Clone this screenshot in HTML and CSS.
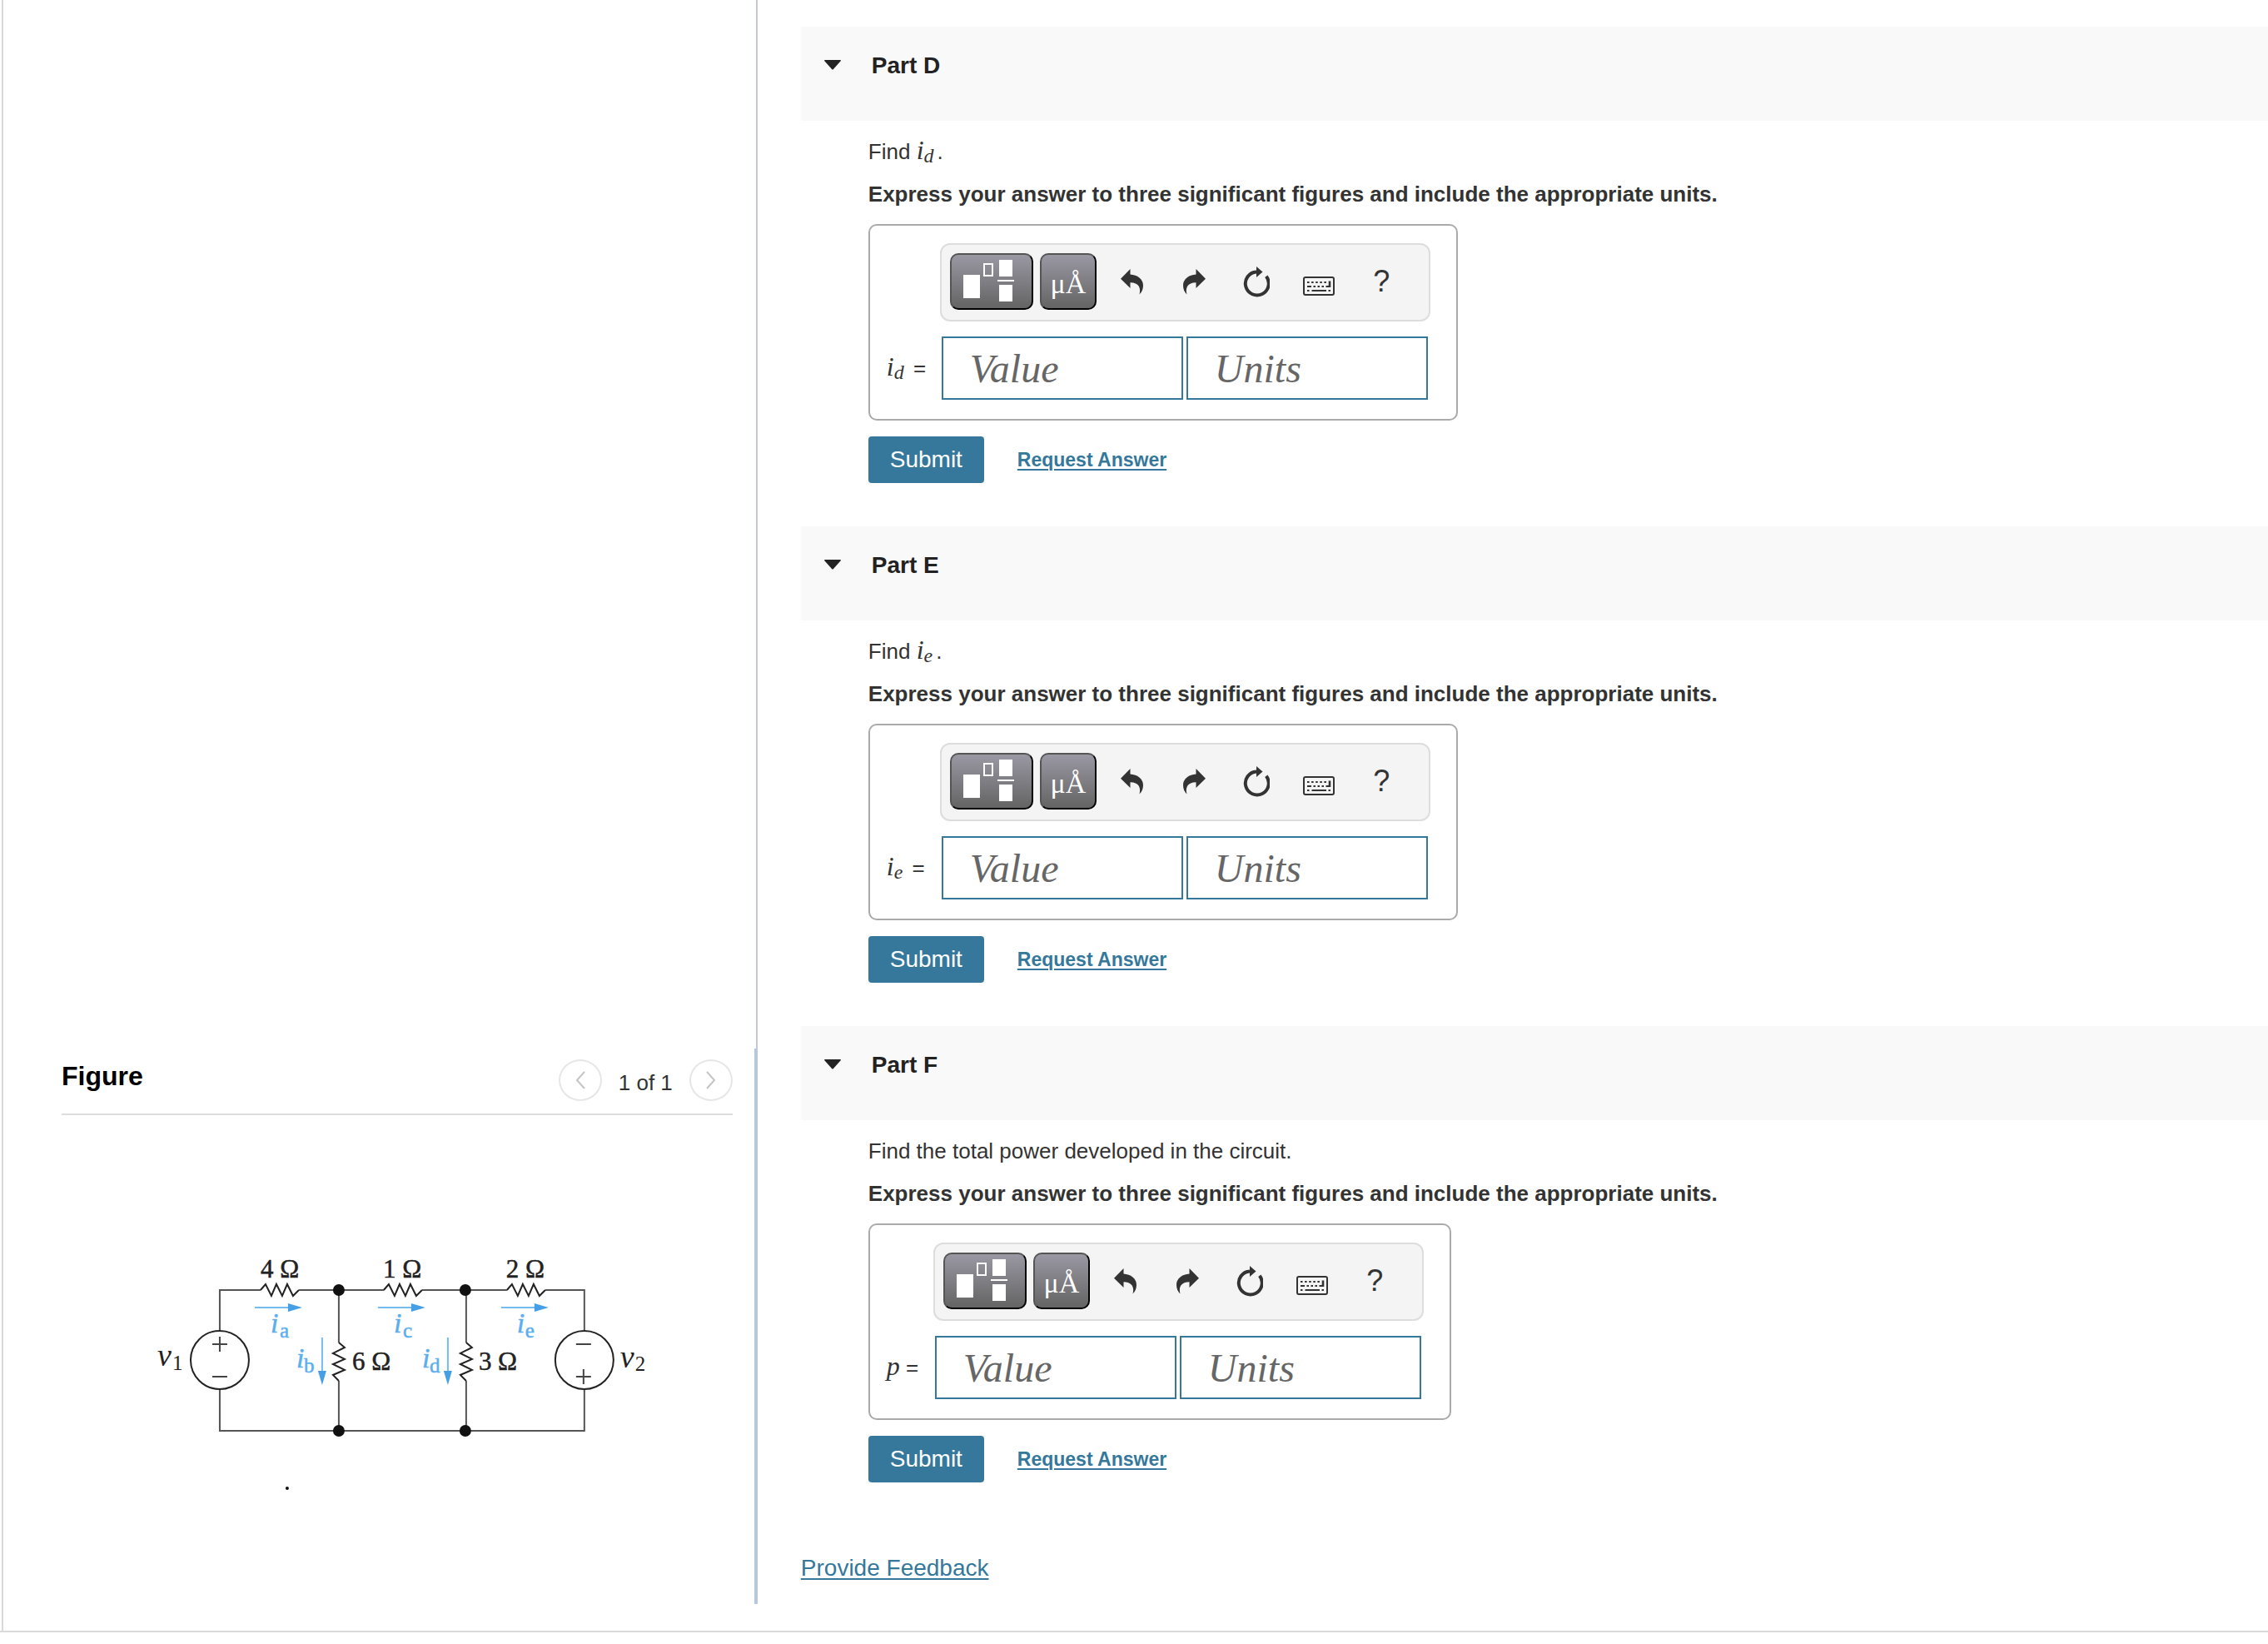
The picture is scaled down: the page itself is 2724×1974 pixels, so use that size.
FILE: index.html
```
<!DOCTYPE html>
<html lang="en">
<head>
  <meta charset="UTF-8" />
  <meta name="viewport" content="width=device-width, initial-scale=1.0"/>
  <title>Circuit Problem</title>
  <link rel="stylesheet" href="styles.css">
</head>
<body>

  <!-- Shared toolbar icons -->
  <svg class="sprite" aria-hidden="true">
    <symbol id="icon-template" viewBox="0 0 96 64">
      <rect x="14" y="24" width="20" height="28" fill="#fff"/>
      <rect x="39" y="11" width="10" height="14" fill="none" stroke="#fff" stroke-width="2"/>
      <rect x="57" y="6" width="16" height="20" fill="#fff"/>
      <rect x="55" y="30" width="20" height="2" fill="#fff"/>
      <rect x="57" y="36" width="16" height="20" fill="#fff"/>
    </symbol>
    <symbol id="icon-undo" viewBox="0 0 27 31">
      <path d="M0 11.7 L11.5 0 V6.5 C20 7 27 12 27 19.5 C27 24 25.5 28 22.5 30.5 C24.5 23 22 16.5 11.5 16.3 V23 Z" fill="#333"/>
    </symbol>
    <symbol id="icon-redo" viewBox="0 0 27 31">
      <path d="M27 11.7 L15.5 0 V6.5 C7 7 0 12 0 19.5 C0 24 1.5 28 4.5 30.5 C2.5 23 5 16.5 15.5 16.3 V23 Z" fill="#333"/>
    </symbol>
    <symbol id="icon-reset" viewBox="0 0 32 37">
      <path d="M27.8 11.8 A14 14 0 1 1 16 6.5" fill="none" stroke="#333" stroke-width="4"/>
      <path d="M16 0 L23.5 6.5 L16 13 Z" fill="#333"/>
    </symbol>
    <symbol id="icon-keyboard" viewBox="0 -10 38 33">
      <rect x="1" y="1" width="36" height="21" rx="2" fill="#f4f4f4" stroke="#333" stroke-width="2"/>
      <path d="M5 7 H29" stroke="#333" stroke-width="2" stroke-dasharray="2.5 2.6"/>
      <path d="M5 12 H10 M12.5 12 H15 M17.5 12 H20 M22.5 12 H25 M27.5 12 H33" stroke="#333" stroke-width="2"/>
      <path d="M32 5.5 V13" stroke="#333" stroke-width="2.6"/>
      <path d="M5 17 H7.5 M10.5 17 H28 M30.5 17 H33" stroke="#333" stroke-width="2.2"/>
    </symbol>
  </svg>

  <div class="page">

    <!-- Left column: figure -->
    <aside class="side">
      <div class="side-top"></div>
      <section class="figure-pane">
        <div class="figure-header">
          <h2>Figure</h2>
          <div class="pager">
            <button type="button" class="pager-btn" aria-label="Previous figure">
              <svg viewBox="0 0 12 22"><path d="M11 1 L2 11 L11 21"/></svg>
            </button>
            <span>1 of 1</span>
            <button type="button" class="pager-btn" aria-label="Next figure">
              <svg viewBox="0 0 12 22"><path d="M1 1 L10 11 L1 21"/></svg>
            </button>
          </div>
        </div>

        <svg class="circuit" viewBox="0 0 806 446" role="img" aria-label="Circuit diagram">
          <defs>
            <path id="res-h" d="M0 0 L6 -7 L13 7 L19 -7 L26 7 L32 -7 L39 7 L46 0"/>
            <path id="res-v" d="M0 0 L7 6 L-7 13 L7 20 L-7 26 L7 33 L-7 39 L0 46"/>
            <g id="arrow">
              <path d="M0 0 H42" stroke="#74bcf0" stroke-width="2"/>
              <path d="M40 -5 L57 0 L40 5 Z" fill="#459fe6"/>
            </g>
          </defs>

          <!-- wires -->
          <g class="wire">
            <path d="M190 118 V69 H239 M285 69 H387 M433 69 H535 M581 69 H628 V118"/>
            <path d="M190 188 V238 H628 V188"/>
            <path d="M333 69 V132 M333 178 V238"/>
            <path d="M486 69 V132 M486 178 V238"/>
          </g>
          <g class="part-line">
            <use href="#res-h" x="239" y="69"/>
            <use href="#res-h" x="387" y="69"/>
            <use href="#res-h" x="535" y="69"/>
            <use href="#res-v" x="333" y="132"/>
            <use href="#res-v" x="486" y="132"/>
            <circle cx="190" cy="153" r="35"/>
            <circle cx="628" cy="153" r="35"/>
          </g>
          <g class="sign">
            <path d="M181 134 H199 M190 125 V143 M181 173 H199"/>
            <path d="M618 134 H636 M618 173 H636 M627 164 V182"/>
          </g>
          <g fill="#111">
            <circle cx="333" cy="69" r="7"/>
            <circle cx="485" cy="69" r="7"/>
            <circle cx="333" cy="238" r="7"/>
            <circle cx="485" cy="238" r="7"/>
            <circle cx="271" cy="307" r="2"/>
          </g>

          <!-- current arrows -->
          <use href="#arrow" transform="translate(232 90)"/>
          <use href="#arrow" transform="translate(380 90)"/>
          <use href="#arrow" transform="translate(528 90)"/>
          <use href="#arrow" transform="translate(313 126) rotate(90)"/>
          <use href="#arrow" transform="translate(464 126) rotate(90)"/>

          <!-- labels -->
          <g class="ohm">
            <text x="239" y="54">4 Ω</text>
            <text x="386" y="54">1 Ω</text>
            <text x="534" y="54">2 Ω</text>
            <text x="349" y="165">6 Ω</text>
            <text x="501" y="165">3 Ω</text>
          </g>
          <g class="current">
            <text x="251" y="120">i</text><text class="sub" x="262" y="126">a</text>
            <text x="399" y="120">i</text><text class="sub" x="410" y="126">c</text>
            <text x="547" y="120">i</text><text class="sub" x="557" y="126">e</text>
            <text x="282" y="162">i</text><text class="sub" x="291" y="168">b</text>
            <text x="433" y="162">i</text><text class="sub" x="442" y="168">d</text>
          </g>
          <g class="volt">
            <text x="115" y="160">v</text><text class="sub" x="133" y="165">1</text>
            <text x="671" y="162">v</text><text class="sub" x="689" y="166">2</text>
          </g>
        </svg>
      </section>
    </aside>

    <!-- Right column: question parts -->
    <main class="content">

      <section class="part">
        <header class="part-header">
          <svg class="caret" viewBox="0 0 20 12"><path d="M1 0 H19 Q21 0 19 2 L11 11 Q10 12 9 11 L1 2 Q-1 0 1 0 Z"/></svg>
          <h3>Part D</h3>
        </header>
        <form class="part-body">
          <p>Find <span class="math">i<sub>d</sub></span>.</p>
          <p class="instruction">Express your answer to three significant figures and include the appropriate units.</p>
          <div class="answer-box">
            <div class="toolbar">
              <button type="button" class="key key-wide" aria-label="Templates"><svg><use href="#icon-template"/></svg></button>
              <button type="button" class="key key-units">μÅ</button>
              <div class="tools">
                <button type="button" aria-label="Undo"><svg class="icon-arrow"><use href="#icon-undo"/></svg></button>
                <button type="button" aria-label="Redo"><svg class="icon-arrow"><use href="#icon-redo"/></svg></button>
                <button type="button" aria-label="Reset"><svg class="icon-reset"><use href="#icon-reset"/></svg></button>
                <button type="button" aria-label="Keyboard"><svg class="icon-keyboard"><use href="#icon-keyboard"/></svg></button>
                <button type="button">?</button>
              </div>
            </div>
            <label for="value-d"><span class="math">i<sub>d</sub></span> =</label>
            <div class="fields">
              <input type="text" id="value-d" placeholder="Value">
              <input type="text" aria-label="Units" placeholder="Units">
            </div>
          </div>
          <div class="actions">
            <button type="submit" class="submit">Submit</button>
            <a href="#">Request Answer</a>
          </div>
        </form>
      </section>

      <section class="part">
        <header class="part-header">
          <svg class="caret" viewBox="0 0 20 12"><path d="M1 0 H19 Q21 0 19 2 L11 11 Q10 12 9 11 L1 2 Q-1 0 1 0 Z"/></svg>
          <h3>Part E</h3>
        </header>
        <form class="part-body">
          <p>Find <span class="math">i<sub>e</sub></span>.</p>
          <p class="instruction">Express your answer to three significant figures and include the appropriate units.</p>
          <div class="answer-box">
            <div class="toolbar">
              <button type="button" class="key key-wide" aria-label="Templates"><svg><use href="#icon-template"/></svg></button>
              <button type="button" class="key key-units">μÅ</button>
              <div class="tools">
                <button type="button" aria-label="Undo"><svg class="icon-arrow"><use href="#icon-undo"/></svg></button>
                <button type="button" aria-label="Redo"><svg class="icon-arrow"><use href="#icon-redo"/></svg></button>
                <button type="button" aria-label="Reset"><svg class="icon-reset"><use href="#icon-reset"/></svg></button>
                <button type="button" aria-label="Keyboard"><svg class="icon-keyboard"><use href="#icon-keyboard"/></svg></button>
                <button type="button">?</button>
              </div>
            </div>
            <label for="value-e"><span class="math">i<sub>e</sub></span> =</label>
            <div class="fields">
              <input type="text" id="value-e" placeholder="Value">
              <input type="text" aria-label="Units" placeholder="Units">
            </div>
          </div>
          <div class="actions">
            <button type="submit" class="submit">Submit</button>
            <a href="#">Request Answer</a>
          </div>
        </form>
      </section>

      <section class="part">
        <header class="part-header">
          <svg class="caret" viewBox="0 0 20 12"><path d="M1 0 H19 Q21 0 19 2 L11 11 Q10 12 9 11 L1 2 Q-1 0 1 0 Z"/></svg>
          <h3>Part F</h3>
        </header>
        <form class="part-body">
          <p>Find the total power developed in the circuit.</p>
          <p class="instruction">Express your answer to three significant figures and include the appropriate units.</p>
          <div class="answer-box answer-box-narrow">
            <div class="toolbar">
              <button type="button" class="key key-wide" aria-label="Templates"><svg><use href="#icon-template"/></svg></button>
              <button type="button" class="key key-units">μÅ</button>
              <div class="tools">
                <button type="button" aria-label="Undo"><svg class="icon-arrow"><use href="#icon-undo"/></svg></button>
                <button type="button" aria-label="Redo"><svg class="icon-arrow"><use href="#icon-redo"/></svg></button>
                <button type="button" aria-label="Reset"><svg class="icon-reset"><use href="#icon-reset"/></svg></button>
                <button type="button" aria-label="Keyboard"><svg class="icon-keyboard"><use href="#icon-keyboard"/></svg></button>
                <button type="button">?</button>
              </div>
            </div>
            <label for="value-p"><span class="math">p</span> =</label>
            <div class="fields">
              <input type="text" id="value-p" placeholder="Value">
              <input type="text" aria-label="Units" placeholder="Units">
            </div>
          </div>
          <div class="actions">
            <button type="submit" class="submit">Submit</button>
            <a href="#">Request Answer</a>
          </div>
        </form>
      </section>

      <a class="feedback" href="#">Provide Feedback</a>
    </main>
  </div>

</body>
</html>
```
FILE: styles.css
```
/* Reset and base styles */
* {
  margin: 0;
  padding: 0;
  box-sizing: border-box;
}

body {
  background-color: #fff;
  color: #333;
  font-family: "Liberation Sans", Arial, sans-serif;
  font-size: 26px;
  line-height: 32px;
}

button,
input {
  font-family: inherit;
}

a {
  color: #35789b;
  text-decoration: underline;
  text-decoration-thickness: 2px;
  text-underline-offset: 3px;
}

.sprite {
  display: none;
}

.page {
  display: grid;
  grid-template-columns: 33.4% 1fr;
  border-bottom: 2px solid #d9d9d9;
}

/* Left column */
.side {
  display: flex;
  flex-direction: column;
  margin-left: 2px;
  padding-bottom: 32px;
  border-left: 2px solid #d9d9d9;
}

.side-top {
  flex: 1;
  border-right: 2px solid #c3cad6;
}

.figure-pane {
  padding: 13px 26px 0 70px;
  border-right: 4px solid #b9c7db;
}

.figure-header {
  display: flex;
  justify-content: space-between;
  padding-bottom: 15px;
  border-bottom: 2px solid #ddd;
}

.figure-header h2 {
  padding-top: 4px;
  color: #000;
  font-size: 32px;
  line-height: 32px;
}

.pager {
  display: flex;
  gap: 20px;
}

.pager span {
  padding-top: 12px;
}

.pager-btn {
  display: flex;
  align-items: center;
  justify-content: center;
  width: 52px;
  height: 50px;
  border: 2px solid #e6e6e6;
  border-radius: 50%;
  background: #fff;
}

.pager-btn svg {
  width: 12px;
  height: 22px;
  fill: none;
  stroke: #c4c4c4;
  stroke-width: 2;
}

/* Circuit figure */
.circuit {
  display: block;
  width: 100%;
  margin-top: 141px;
  font-family: "Liberation Serif", "Times New Roman", serif;
}

.wire {
  fill: none;
  stroke: #555;
  stroke-width: 2;
}

.part-line {
  fill: none;
  stroke: #222;
  stroke-width: 2;
}

.sign {
  stroke: #444;
  stroke-width: 2;
}

.ohm {
  fill: #222;
  stroke: #222;
  stroke-width: 0.5;
  font-size: 31px;
}

.current {
  fill: #5aaeee;
  stroke: #5aaeee;
  stroke-width: 0.5;
  font-size: 34px;
  font-style: italic;
}

.volt {
  fill: #222;
  font-size: 38px;
  font-style: italic;
}

.circuit .sub {
  font-size: 25px;
  font-style: normal;
}

/* Right column */
.content {
  padding: 32px 0 59px 52px;
}

.part-header {
  display: flex;
  padding: 31px 0 50px 28px;
  background: #f9f9f9;
  color: #222;
}

.part-header h3 {
  font-size: 28px;
  line-height: 32px;
}

.caret {
  width: 20px;
  height: 12px;
  margin: 9px 37px 0 0;
  fill: #222;
}

.part-body {
  padding: 21px 0 52px 81px;
}

.instruction {
  margin-top: 19px;
  font-weight: bold;
}

.math {
  font-family: "Liberation Serif", "Times New Roman", serif;
  font-size: 32px;
  font-style: italic;
  line-height: 0;
}

.math sub {
  margin-right: 4px;
  font-size: 24px;
  line-height: 0;
  vertical-align: -4px;
}

.answer-box {
  display: grid;
  grid-template-columns: 64px auto;
  row-gap: 18px;
  width: fit-content;
  margin-top: 20px;
  padding: 21px 31px 23px 20px;
  border: 2px solid #aaa;
  border-radius: 10px;
}

.answer-box-narrow {
  grid-template-columns: 56px auto;
}

.answer-box label {
  align-self: center;
}

/* Answer toolbar */
.toolbar {
  grid-column: 2;
  display: flex;
  padding: 10px 19px 12px 10px;
  border: 2px solid #ddd;
  border-radius: 12px;
  background: #f4f4f4;
}

.key {
  width: 68px;
  height: 68px;
  border: 2px solid;
  border-color: #555 #000 #000 #555;
  border-radius: 10px;
  background: linear-gradient(#9a98a3, #646464);
  color: #fff;
  font-family: "Liberation Serif", "Times New Roman", serif;
  font-size: 34px;
}

.key-wide {
  width: 100px;
}

.key-units {
  margin-left: 8px;
  padding-top: 6px;
}

.key svg {
  display: block;
  width: 96px;
  height: 64px;
}

.tools {
  display: flex;
  margin-left: 5px;
}

.tools button {
  display: flex;
  align-items: center;
  justify-content: center;
  width: 75px;
  height: 68px;
  border: none;
  background: none;
  color: #333;
  font-size: 36px;
}

.icon-arrow {
  width: 27px;
  height: 31px;
}

.icon-reset {
  width: 32px;
  height: 37px;
}

.icon-keyboard {
  width: 38px;
  height: 33px;
}

/* Value and units */
.fields {
  display: flex;
  gap: 4px;
  padding: 0 2px;
}

.fields input {
  width: 290px;
  height: 76px;
  padding-left: 32px;
  border: 2px solid #35789b;
  background: #fff;
  font-family: "Liberation Serif", "Times New Roman", serif;
  font-size: 48px;
  font-style: italic;
}

.fields input::placeholder {
  color: #666;
}

.actions {
  display: flex;
  align-items: center;
  gap: 40px;
  margin-top: 19px;
}

.submit {
  width: 139px;
  height: 56px;
  border: none;
  border-radius: 4px;
  background: #35789b;
  color: #fff;
  font-size: 28px;
}

.actions a {
  font-size: 23px;
  font-weight: bold;
}

.feedback {
  display: inline-block;
  margin-top: 35px;
  font-size: 28px;
}
```
